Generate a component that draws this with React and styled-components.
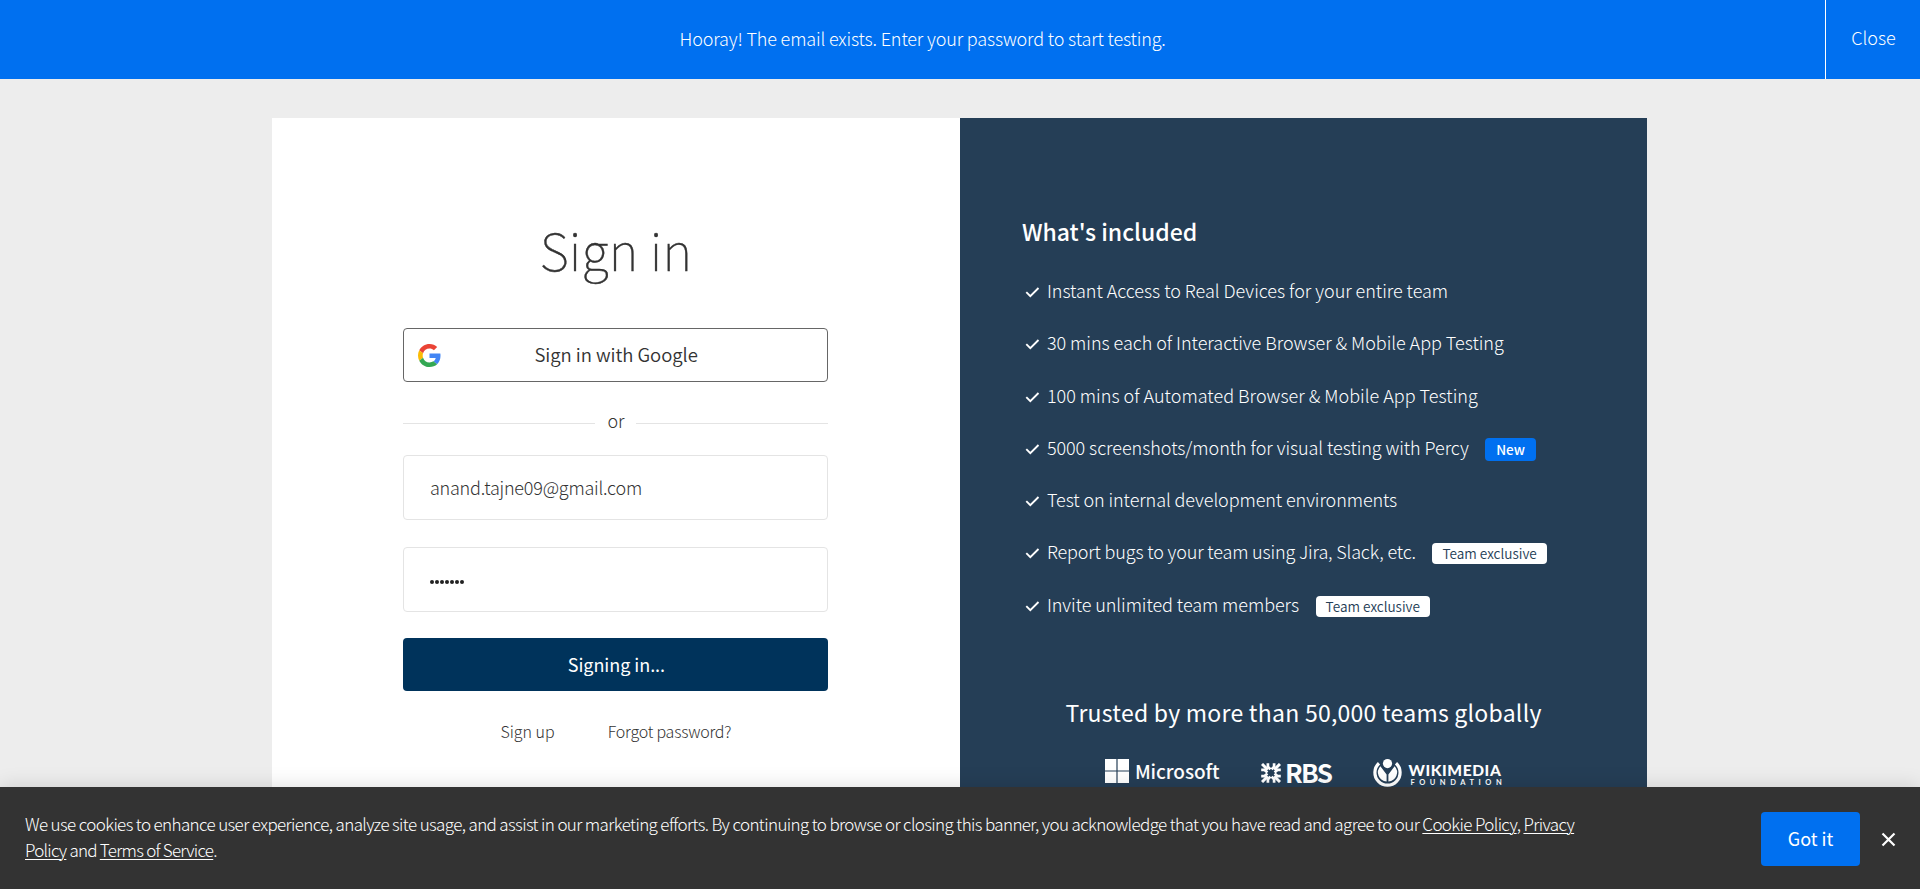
import React from "react";
import styled, { createGlobalStyle } from "styled-components";

const GlobalStyle = createGlobalStyle`
  * { box-sizing: border-box; }
  html, body { margin: 0; overflow: hidden; }
  body {
    font-family: "Noto Sans CJK SC", "Noto Sans", sans-serif;
    font-weight: 300;
    color: #333;
    background: #ededed;
  }
`;

const Page = styled.div`
  position: relative;
  height: 889px;
  overflow: hidden;
  background: #ededed;
`;

const Banner = styled.header`
  display: flex;
  height: 79px;
  background: #0070f0;
  color: #fff;
  font-size: 18px;
  line-height: 24px;
`;

const BannerMessage = styled.p`
  flex: 1;
  margin: 0;
  padding: 26px 0 0 679.5px;
  letter-spacing: -0.15px;
`;

const BannerClose = styled.button`
  width: 95px;
  padding: 0 0 5px 1px;
  border: 0;
  border-left: 1px solid #fff;
  background: none;
  color: inherit;
  font: inherit;
  letter-spacing: -0.05px;
`;

const Card = styled.main`
  display: grid;
  grid-template-columns: 1fr 1fr;
  width: 1375px;
  height: 780px;
  margin: 39px 0 0 272.4px;
`;

const SignInPane = styled.section`
  padding: 91px 131.5px 0 131px;
  background: #fff;
`;

const Title = styled.h1`
  margin: 0 0 39px;
  font-size: 51px;
  line-height: 80px;
  font-weight: 100;
  letter-spacing: 0.15px;
  text-align: center;
  -webkit-text-stroke: 0.35px #333;
`;

const GoogleButton = styled.button`
  display: flex;
  align-items: center;
  width: 100%;
  height: 54px;
  padding: 0 14px 0 13.5px;
  border: 1px solid #666;
  border-radius: 4px;
  background: #fff;
  color: #333;
  font: inherit;
  font-size: 18.5px;
  font-weight: 350;
  line-height: 24px;

  span {
    flex: 1;
    padding: 0 22px 2px 0;
    text-align: center;
    letter-spacing: -0.04px;
  }
`;

const Divider = styled.div`
  display: flex;
  align-items: center;
  justify-content: space-between;
  height: 24px;
  margin: 26px 0 23px;
  font-size: 18px;
  line-height: 24px;
  letter-spacing: -0.3px;

  &::before, &::after {
    content: "";
    width: 192px;
    height: 1px;
    margin-top: 6px;
    background: #e4e4e4;
  }
`;

const Input = styled.input`
  display: block;
  width: 100%;
  height: 65px;
  margin-bottom: 27px;
  padding: 0 26px 2px 25.5px;
  border: 1px solid #e4e4e4;
  border-radius: 4px;
  outline: 0;
  background: #fff;
  color: #333;
  font: inherit;
  font-size: 18px;
  letter-spacing: -0.22px;
`;

const PasswordBox = styled.div`
  display: flex;
  align-items: center;
  gap: 1px;
  height: 65px;
  margin-bottom: 26px;
  padding: 5px 25.5px 0 26px;
  border: 1px solid #e4e4e4;
  border-radius: 4px;
`;

const Dot = styled.i`
  width: 4px;
  height: 4px;
  border-radius: 50%;
  background: #222;
`;

const SubmitButton = styled.button`
  width: 100%;
  height: 53px;
  padding: 0 0 1px 1px;
  border: 0;
  border-radius: 4px;
  background: #00335b;
  color: #fff;
  font: inherit;
  font-size: 18px;
  font-weight: 400;
  letter-spacing: -0.04px;
`;

const Links = styled.nav`
  display: flex;
  justify-content: center;
  gap: 53px;
  margin-top: 28px;
  font-size: 16px;
  line-height: 24px;
  letter-spacing: -0.22px;

  a:first-child { letter-spacing: 0; }
`;

const InfoPane = styled.section`
  padding: 99px 62px 0;
  background: #253e56;
  color: #fff;
`;

const InfoTitle = styled.h2`
  margin: 0;
  font-size: 23px;
  line-height: 28px;
  font-weight: ${(p) => (p.$center ? 400 : 450)};
  letter-spacing: ${(p) => (p.$center ? "0.25px" : "0")};
  text-align: ${(p) => (p.$center ? "center" : "left")};
`;

const Features = styled.ul`
  margin: 19px 0 68px;
  padding: 0;
  list-style: none;
`;

const Feature = styled.li`
  display: flex;
  align-items: center;
  height: 52.25px;
  padding-left: 3.5px;
  font-size: 18px;
  line-height: 24px;
  letter-spacing: ${(p) => p.$spacing || -0.03}px;
  white-space: nowrap;

  svg {
    flex: none;
    margin: 4px 6.5px 0 0;
  }
`;

const Badge = styled.span`
  height: ${(p) => (p.$blue ? 23 : 21)}px;
  margin: 5px 0 0 16.5px;
  padding: 0 ${(p) => (p.$blue ? 11 : 10)}px;
  border-radius: 4px;
  background: ${(p) => (p.$blue ? "#0070f0" : "#fff")};
  color: ${(p) => (p.$blue ? "#fff" : "#253e56")};
  font-size: ${(p) => (p.$blue ? 13.5 : 13.6)}px;
  font-weight: ${(p) => (p.$blue ? 500 : 350)};
  line-height: ${(p) => (p.$blue ? 22 : 20)}px;
  letter-spacing: 0;
`;

const Logos = styled.div`
  display: flex;
  align-items: flex-start;
  height: 30px;
  margin: 33px 0 0 83.5px;
`;

const Microsoft = styled.div`
  display: flex;
  align-items: center;
  gap: 5.5px;
  width: 156px;
  height: 24px;
  font-size: 19px;
  font-weight: 500;
  line-height: 24px;
  letter-spacing: -0.05px;
`;

const Rbs = styled.div`
  display: flex;
  align-items: center;
  gap: 3.5px;
  width: 112px;
  height: 28px;
  font-size: 26px;
  font-weight: 700;
  line-height: 26px;
  letter-spacing: -1.5px;
  svg { flex: none; }
`;

const RbsName = styled.span`
  margin-top: -2px;
`;

const Wikimedia = styled.div`
  display: flex;
  gap: 6px;
  svg { flex: none; }
`;

const WikiWords = styled.div`
  padding-top: 4px;
  font-family: Lato, sans-serif;

  b {
    display: block;
    font-size: 15.5px;
    font-weight: 900;
    line-height: 15px;
    letter-spacing: 0.6px;
  }
  small {
    display: block;
    padding-left: 2px;
    font-size: 7.5px;
    font-weight: 700;
    line-height: 9px;
    letter-spacing: 4.55px;
  }
`;

const CookieBar = styled.footer`
  position: absolute;
  left: 0;
  right: 0;
  bottom: 0;
  display: flex;
  align-items: flex-start;
  height: 102px;
  padding: 25px 24px 0;
  background: #333;
  color: #fff;
  box-shadow: 0 0 20px rgba(0, 0, 0, 0.14);
`;

const CookieText = styled.p`
  flex: 1;
  margin: -1px 0 0 1px;
  font-size: 17px;
  line-height: 26px;
  letter-spacing: -0.625px;
  white-space: nowrap;

  u { text-underline-offset: 2px; text-decoration-thickness: 1px; }
`;

const LastLine = styled.span`
  display: block;
  letter-spacing: -0.75px;
`;

const GotIt = styled.button`
  width: 99px;
  height: 54px;
  padding: 0 0 2px;
  border: 0;
  border-radius: 4px;
  background: #0070f0;
  color: #fff;
  font: inherit;
  font-size: 18px;
  font-weight: 400;
`;

const Dismiss = styled.button`
  display: flex;
  margin: 20px 0 0 21px;
  padding: 0;
  border: 0;
  background: none;
`;

const Check = () => (
  <svg width="15" height="12" viewBox="0 0 15 12" fill="none" stroke="#fff" strokeWidth="1.9">
    <path d="M1.3 6.2 L5.3 10.2 L13.5 2" />
  </svg>
);

const GoogleIcon = () => (
  <svg width="23" height="23" viewBox="0 0 48 48">
    <path fill="#EA4335" d="M24 9.5c3.54 0 6.71 1.22 9.21 3.6l6.85-6.85C35.9 2.38 30.47 0 24 0 14.62 0 6.51 5.38 2.56 13.22l7.98 6.19C12.43 13.72 17.74 9.5 24 9.5z" />
    <path fill="#4285F4" d="M46.98 24.55c0-1.57-.15-3.09-.38-4.55H24v9.02h12.94c-.58 2.96-2.26 5.48-4.78 7.18l7.73 6c4.51-4.18 7.09-10.36 7.09-17.65z" />
    <path fill="#FBBC05" d="M10.53 28.59c-.48-1.45-.76-2.99-.76-4.59s.27-3.14.76-4.59l-7.98-6.19C.92 16.46 0 20.12 0 24c0 3.88.92 7.54 2.56 10.78l7.97-6.19z" />
    <path fill="#34A853" d="M24 48c6.48 0 11.93-2.13 15.89-5.81l-7.73-6c-2.15 1.45-4.92 2.3-8.16 2.3-6.26 0-11.57-4.22-13.47-9.91l-7.98 6.19C6.51 42.62 14.62 48 24 48z" />
  </svg>
);

const MicrosoftMark = () => (
  <svg width="24" height="24" viewBox="0 0 24 24" fill="#fff">
    <path d="M0 0h11.4v11.4H0zM12.6 0H24v11.4H12.6zM0 12.6h11.4V24H0zM12.6 12.6H24V24H12.6z" />
  </svg>
);

const RbsMark = () => (
  <svg width="20" height="20" viewBox="0 0 20 20" stroke="#fff" fill="none">
    {[0, 90, 180, 270].map((a) => (
      <g key={a} transform={`rotate(${a} 10 10)`}>
        <path strokeWidth="2.7" d="M6.9 0.2 V3.6 L9.4 6.4 M13.1 0.2 V3.6 L10.6 6.4" />
        <path strokeWidth="3" d="M1 1 L6.8 6.8" />
      </g>
    ))}
  </svg>
);

const WikimediaMark = () => (
  <svg width="29" height="29" viewBox="0 0 29 29">
    <circle cx="14.5" cy="4.6" r="4.6" fill="#fff" />
    <path d="M6 4.3 A12.6 12.6 0 1 0 23 4.3" fill="none" stroke="#fff" strokeWidth="3.2" />
    <path d="M7.4 7.2 A9 9 0 0 0 13.6 22.4 V15.5 Z M21.6 7.2 A9 9 0 0 1 15.4 22.4 V15.5 Z" fill="#fff" />
  </svg>
);

const features = [
  { text: "Instant Access to Real Devices for your entire team" },
  { text: "30 mins each of Interactive Browser & Mobile App Testing" },
  { text: "100 mins of Automated Browser & Mobile App Testing", spacing: 0.01 },
  { text: "5000 screenshots/month for visual testing with Percy", badge: "New", spacing: -0.055 },
  { text: "Test on internal development environments", spacing: -0.09 },
  { text: "Report bugs to your team using Jira, Slack, etc.", badge: "Team exclusive", spacing: -0.155 },
  { text: "Invite unlimited team members", badge: "Team exclusive", spacing: -0.06 },
];

export default function App() {
  return (
    <Page>
      <GlobalStyle />
      <Banner>
        <BannerMessage>Hooray! The email exists. Enter your password to start testing.</BannerMessage>
        <BannerClose>Close</BannerClose>
      </Banner>
      <Card>
        <SignInPane>
          <Title>Sign in</Title>
          <GoogleButton><GoogleIcon /><span>Sign in with Google</span></GoogleButton>
          <Divider>or</Divider>
          <Input readOnly value="anand.tajne09@gmail.com" />
          <PasswordBox>
            {Array.from({ length: 7 }, (_, i) => <Dot key={i} />)}
          </PasswordBox>
          <SubmitButton>Signing in...</SubmitButton>
          <Links><a>Sign up</a><a>Forgot password?</a></Links>
        </SignInPane>
        <InfoPane>
          <InfoTitle>What's included</InfoTitle>
          <Features>
            {features.map((f) => (
              <Feature key={f.text} $spacing={f.spacing}>
                <Check />
                {f.text}
                {f.badge && <Badge $blue={f.badge === "New"}>{f.badge}</Badge>}
              </Feature>
            ))}
          </Features>
          <InfoTitle $center>Trusted by more than 50,000 teams globally</InfoTitle>
          <Logos>
            <Microsoft><MicrosoftMark />Microsoft</Microsoft>
            <Rbs><RbsMark /><RbsName>RBS</RbsName></Rbs>
            <Wikimedia>
              <WikimediaMark />
              <WikiWords><b>WIKIMEDIA</b><small>FOUNDATION</small></WikiWords>
            </Wikimedia>
          </Logos>
        </InfoPane>
      </Card>
      <CookieBar>
        <CookieText>
          We use cookies to enhance user experience, analyze site usage, and assist in our marketing efforts. By continuing to browse or closing this banner, you acknowledge that you have read and agree to our <u>Cookie Policy</u>, <u>Privacy</u>
          <LastLine><u>Policy</u> and <u>Terms of Service</u>.</LastLine>
        </CookieText>
        <GotIt>Got it</GotIt>
        <Dismiss aria-label="Dismiss">
          <svg width="15" height="15" viewBox="0 0 15 15" stroke="#fff" strokeWidth="2.2">
            <path d="M1.5 1.5 L13.5 13.5 M13.5 1.5 L1.5 13.5" />
          </svg>
        </Dismiss>
      </CookieBar>
    </Page>
  );
}
